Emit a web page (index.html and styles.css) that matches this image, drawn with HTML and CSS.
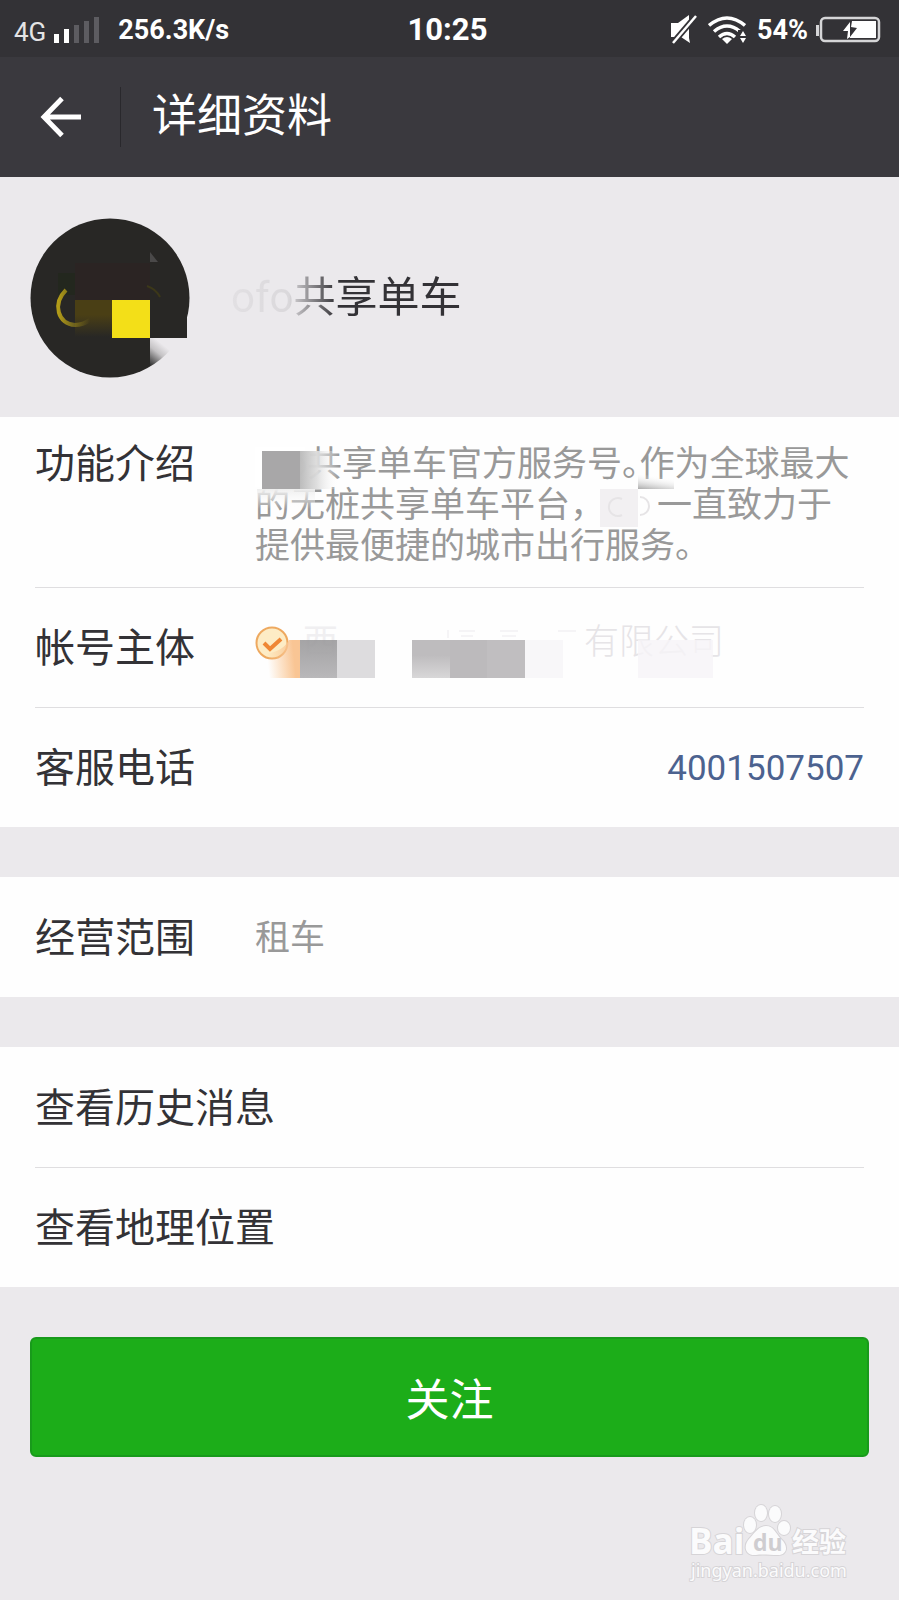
FILE: index.html
```html
<!DOCTYPE html>
<html lang="zh-CN">
<head>
<meta charset="utf-8">
<meta name="viewport" content="width=device-width, initial-scale=1">
<title>详细资料</title>
<link rel="stylesheet" href="styles.css">
</head>
<body>
<div class="status">
  <div class="status-left">
    <span class="network">4G</span>
    <svg class="signal" width="46" height="28" viewBox="0 0 46 28" aria-hidden="true">
      <path fill="#fff" d="M0 18h5v9H0zM10 13h5v14h-5z"/>
      <path fill="#5d5c61" d="M20 9h5v18h-5zM30 5h5v22h-5zM40 1h5v26h-5z"/>
    </svg>
    <span>256.3K/s</span>
  </div>
  <div class="clock">10:25</div>
  <div class="status-right">
    <svg width="27" height="30" viewBox="0 0 27 30" aria-hidden="true">
      <path fill="#fff" d="M1 8h7l11-8v23l1 5-9-6H1z"/>
      <path stroke="#333236" stroke-width="6" d="M2 29L26 1"/>
      <path stroke="#fff" stroke-width="2.500" d="M3 28L26 1"/>
    </svg>
    <svg width="38" height="28" viewBox="0 0 38 28" aria-hidden="true">
      <g fill="none" stroke="#fff" stroke-width="3.500">
        <path d="M1 9.500q18-15 36 0M6 15.500q13-11 26 0M11 21q8-7 16 0"/>
      </g>
      <path fill="#fff" d="M14 23q5-4 10 0l-5 5z"/>
      <path fill="#333236" d="M30 14h8v14h-8z"/>
      <path fill="#fff" d="M35 15l3 5h-6zM35 27l3-5h-6z"/>
    </svg>
    <span class="percent">54%</span>
    <svg width="66" height="28" viewBox="0 0 66 28" aria-hidden="true">
      <path fill="#d5d5d7" d="M1 9h3v11H1z"/>
      <rect x="6" y="2" width="58" height="23" rx="4" fill="none" stroke="#d5d5d7" stroke-width="2.500"/>
      <path fill="#fff" d="M35 5h26v17H35z"/>
      <path fill="#333236" d="M35 5h2l-1 6 6 1-7 9z"/>
      <path fill="#fff" d="M35 6v15l-3 2 1-8h-5z"/>
    </svg>
  </div>
</div>

<header class="topbar">
  <button class="back" type="button" aria-label="返回">
    <svg width="42" height="42" viewBox="0 0 42 42" aria-hidden="true">
      <path fill="none" stroke="#fff" stroke-width="5" d="M22 2.500L4 21l18 18.500M3 21h38"/>
    </svg>
  </button>
  <h1 class="title">详细资料</h1>
</header>

<main>
  <section class="profile">
    <svg class="avatar" width="160" height="160" viewBox="0 0 160 160" aria-hidden="true">
      <defs>
        <linearGradient id="ring" x1="0" x2="1"><stop offset="0" stop-color="#b39c18"/><stop offset="1" stop-color="#b39c18" stop-opacity="0"/></linearGradient>
        <linearGradient id="olive" x1="0" y1="0" x2="0" y2="1"><stop offset=".4" stop-color="#4a3f15"/><stop offset="1" stop-color="#282725"/></linearGradient>
        <linearGradient id="corner" x1=".5" y1=".3" x2=".1" y2=".8"><stop offset="0" stop-color="#ebe9ec"/><stop offset=".4" stop-color="#c4c2c4"/><stop offset="1" stop-color="#333"/></linearGradient>
        <clipPath id="disc"><circle cx="80" cy="80" r="79.500"/></clipPath>
      </defs>
      <circle cx="80" cy="80" r="79.500" fill="#282725"/>
      <path fill="#282725" d="M120 82h37v38h-37z"/>
      <path fill="#2b2423" d="M45 45h75v37H45z"/>
      <path fill="#1e2718" d="M28 55h17v22H28z" opacity=".5"/>
      <path fill="url(#olive)" d="M45 82h37v37H45z"/>
      <path fill="#f3df18" d="M82 82h38v38H82z"/>
      <path fill="none" stroke="url(#ring)" stroke-width="4" d="M36 72c-14 14-8 34 9 35q8 0 15-5"/>
      <path fill="none" stroke="#3c3819" stroke-width="2" d="M117 68q9 3 13 11"/>
      <path fill="#4a4949" d="M120 34v10h8z"/>
      <path fill="#ebe9ec" d="M120 120h40v40h-40z"/>
      <path fill="url(#corner)" clip-path="url(#disc)" d="M120 120h37v37h-37z"/>
    </svg>
    <h2 class="name">ofo共享单车</h2>
  </section>

  <section class="group">
    <div class="row row-intro">
      <span class="label">功能介绍</span>
      <p class="value">ofo共享单车官方服务号<span class="half">。</span>作为全球最大<br>的无桩共享单车平台，<span class="faint">ofo</span>一直致力于<br>提供最便捷的城市出行服务。
        <svg class="mask" width="420" height="100" viewBox="0 0 420 100" aria-hidden="true">
          <defs>
            <linearGradient id="fade"><stop offset="0" stop-color="#bababa"/><stop offset=".45" stop-color="#ddd" stop-opacity=".95"/><stop offset="1" stop-color="#fff" stop-opacity="0"/></linearGradient>
            <linearGradient id="down" x1="0" y1="0" x2="0" y2="1"><stop offset="0" stop-color="#eee"/><stop offset="1" stop-color="#fff" stop-opacity="0"/></linearGradient>
            <linearGradient id="up" x1="0" y1="1" x2=".4" y2="0"><stop offset="0" stop-color="#aaa"/><stop offset="1" stop-color="#fff" stop-opacity="0"/></linearGradient>
          </defs>
          <path fill="#fff" d="M0 3h50v8H0zM0 11h8v32H0z"/>
          <path fill="url(#fade)" d="M44 7h40v38H44z"/>
          <path fill="#a8a7a8" d="M7 7h38v38H7z"/>
          <path fill="url(#down)" d="M2 45h58v20H2z"/>
          <path fill="#f2f0f2" d="M345 45h38v38h-38z"/>
          <path fill="#fefefe" d="M383 45h20v38h-20z"/>
          <path fill="none" stroke="#e6e4e6" stroke-width="2" d="M367 55a9 9 0 1 0 0 16M385 53a9 9 0 0 1 0 18"/>
          <path fill="url(#up)" d="M383 31h36v14h-36z"/>
        </svg>
      </p>
    </div>
    <div class="row">
      <span class="label">帐号主体</span>
      <div class="value owner">
        <svg width="34" height="34" viewBox="0 0 34 34" aria-hidden="true">
          <circle cx="17" cy="17" r="15.500" fill="#fdecc5" stroke="#eea960" stroke-width="2"/>
          <path fill="none" stroke="#ef8735" stroke-width="4" d="M9 17l6 6 11-10"/>
        </svg>
        <span class="owner-first">西</span>
        <span class="owner-last">有限公司</span>
        <svg class="mask" width="470" height="58" viewBox="0 0 470 58" aria-hidden="true">
          <defs>
            <linearGradient id="peach" x1="0" y1=".1" x2="1" y2="0"><stop offset=".1" stop-color="#fbc68e" stop-opacity="0"/><stop offset=".8" stop-color="#f9c594"/></linearGradient>
            <linearGradient id="grey" x1="0" y1="0" x2="0" y2="1"><stop offset="0" stop-color="#9b9a9c" stop-opacity=".9"/><stop offset="1" stop-color="#b9b8ba"/></linearGradient>
            <linearGradient id="silver" x1="0" y1="0" x2="0" y2="1"><stop offset=".4" stop-color="#bebcbe"/><stop offset="1" stop-color="#d8d7d8"/></linearGradient>
          </defs>
          <path fill="url(#peach)" d="M7 34q20-1 27-14h11v38H7z"/>
          <path fill="url(#grey)" d="M45 20h37v38H45z"/>
          <path fill="#dddcde" d="M82 20h38v38H82z"/>
          <path fill="url(#silver)" d="M157 20h38v38h-38z"/>
          <path fill="#bcbabc" d="M195 20h37v38h-37z"/>
          <path fill="#c0bec0" d="M232 20h38v38h-38z"/>
          <path fill="#f8f7f9" d="M270 20h38v38h-38z"/>
          <path fill="#f6f4f7" opacity=".8" d="M383 20h75v38h-75z"/>
          <path fill="none" stroke="#f5f4f6" stroke-width="2" d="M193 10v8M204 11h16M206 16h12M245 11h18M247 16h14M303 11h18"/>
        </svg>
      </div>
    </div>
    <div class="row">
      <span class="label">客服电话</span>
      <a class="phone" href="tel:4001507507">4001507507</a>
    </div>
  </section>

  <section class="group">
    <div class="row">
      <span class="label">经营范围</span>
      <span class="value">租车</span>
    </div>
  </section>

  <section class="group">
    <a class="row" href="#history">查看历史消息</a>
    <a class="row" href="#location">查看地理位置</a>
  </section>

  <div class="action">
    <button class="follow" type="button">关注</button>
  </div>
</main>

<footer class="brand">
  <svg width="164" height="84" viewBox="0 0 164 84" role="img" aria-label="Baidu 经验">
    <g fill="#fbfbfc" stroke="#d6d4d7" stroke-width="2" paint-order="stroke">
      <text class="brand-latin" x="1" y="53">Bai</text>
      <text class="brand-cjk" x="104" y="51">经验</text>
      <text class="brand-url" x="3" y="76">jingyan.baidu.com</text>
      <ellipse cx="62" cy="24" rx="6" ry="8"/>
      <ellipse cx="73" cy="12" rx="6" ry="8"/>
      <ellipse cx="87" cy="13" rx="6" ry="8"/>
      <ellipse cx="96" cy="27" rx="6" ry="7"/>
      <path d="M78 25c8 0 10 8 15 13 8 7 6 16-3 16-8 0-16-1-22 0-11 1-13-9-7-16 5-5 9-13 17-13z"/>
    </g>
    <text class="brand-du" x="65" y="50">du</text>
  </svg>
</footer>
</body>
</html>
```
FILE: styles.css
```css
* {
  box-sizing: border-box;
}

body {
  margin: 0;
  min-height: 100vh;
  background: #ebe9ec;
  color: #333236;
  font-family: Roboto, "Noto Sans CJK SC", sans-serif;
  font-size: 40px;
}

h1, h2, p {
  margin: 0;
  font-weight: 400;
}

a {
  color: inherit;
  text-decoration: none;
}

button {
  border: 0;
  font: inherit;
  color: #fff;
}

svg {
  display: block;
  flex: none;
}

.status {
  display: grid;
  grid-template-columns: 1fr auto 1fr;
  align-items: center;
  height: 57px;
  padding: 2px 18px 0 14px;
  background: #333236;
  color: #fff;
  font-size: 27px;
  font-weight: 700;
  line-height: 32px;
}

.status-left,
.status-right {
  display: flex;
  align-items: center;
}

.status-left {
  gap: 8px;
}

.signal {
  margin-right: 10px;
}

.network {
  padding-top: 4px;
  font-size: 26px;
  font-weight: 400;
  color: #e4e4e5;
}

.clock {
  font-size: 31px;
}

.status-right {
  justify-content: flex-end;
  gap: 11px;
}

.percent {
  margin-right: -4px;
}

.topbar {
  display: flex;
  align-items: center;
  height: 120px;
  background: #3a393e;
  color: #fff;
}

.back {
  display: flex;
  align-items: center;
  height: 60px;
  padding: 0 38px 0 40px;
  border-right: 1px solid #29282c;
  background: none;
}

.title {
  padding-left: 31px;
  font-size: 45px;
  line-height: 60px;
}

.profile {
  display: flex;
  align-items: center;
  gap: 41px;
  height: 240px;
  padding: 2px 30px 0;
}

.name {
  font-size: 42px;
  line-height: 60px;
  color: transparent;
  background: linear-gradient(90deg, #e2e0e3 0, #dad8db 58px, #333236 106px);
  background-clip: text;
}

.group {
  margin-bottom: 50px;
  padding: 0 35px;
  background: #fefefe;
}

.row {
  display: flex;
  align-items: center;
  min-height: 120px;
  padding-top: 2px;
  line-height: 41px;
}

.row + .row {
  border-top: 1px solid #dfdee0;
}

.row-intro {
  align-items: flex-start;
  padding: 27px 0 20px;
}

.label {
  flex: none;
  width: 220px;
}

.value {
  position: relative;
  flex: 1;
  font-size: 35px;
  color: #999;
  white-space: nowrap;
}

.half {
  font-feature-settings: "halt";
}

.faint {
  color: #f4f3f5;
}

.mask {
  position: absolute;
  top: 0;
  left: 0;
}

.owner {
  display: flex;
  align-items: center;
  height: 58px;
  padding-bottom: 12px;
}

.owner-first {
  margin-left: 14px;
  color: #f0eff1;
}

.owner-last {
  margin-left: 246px;
  color: #e6e4e7;
  font-weight: 300;
}

.phone {
  margin-left: auto;
  font-size: 35px;
  color: #4c628f;
}

.action {
  padding: 0 30px;
}

.follow {
  display: block;
  width: 100%;
  height: 120px;
  border: 2px solid #189a1b;
  border-radius: 6px;
  background: #1cad19;
  font-size: 44px;
}

.brand {
  display: flex;
  justify-content: flex-end;
  padding: 44px 47px 0 0;
}

.brand-latin {
  font: 700 35px "Open Sans", sans-serif;
}

.brand-cjk {
  font: 700 27px "Noto Sans CJK SC", sans-serif;
}

.brand-url {
  font: 400 18px "Noto Sans", sans-serif;
}

.brand-du {
  fill: #cfcdd0;
  font: 700 23px "Open Sans", sans-serif;
}
```
